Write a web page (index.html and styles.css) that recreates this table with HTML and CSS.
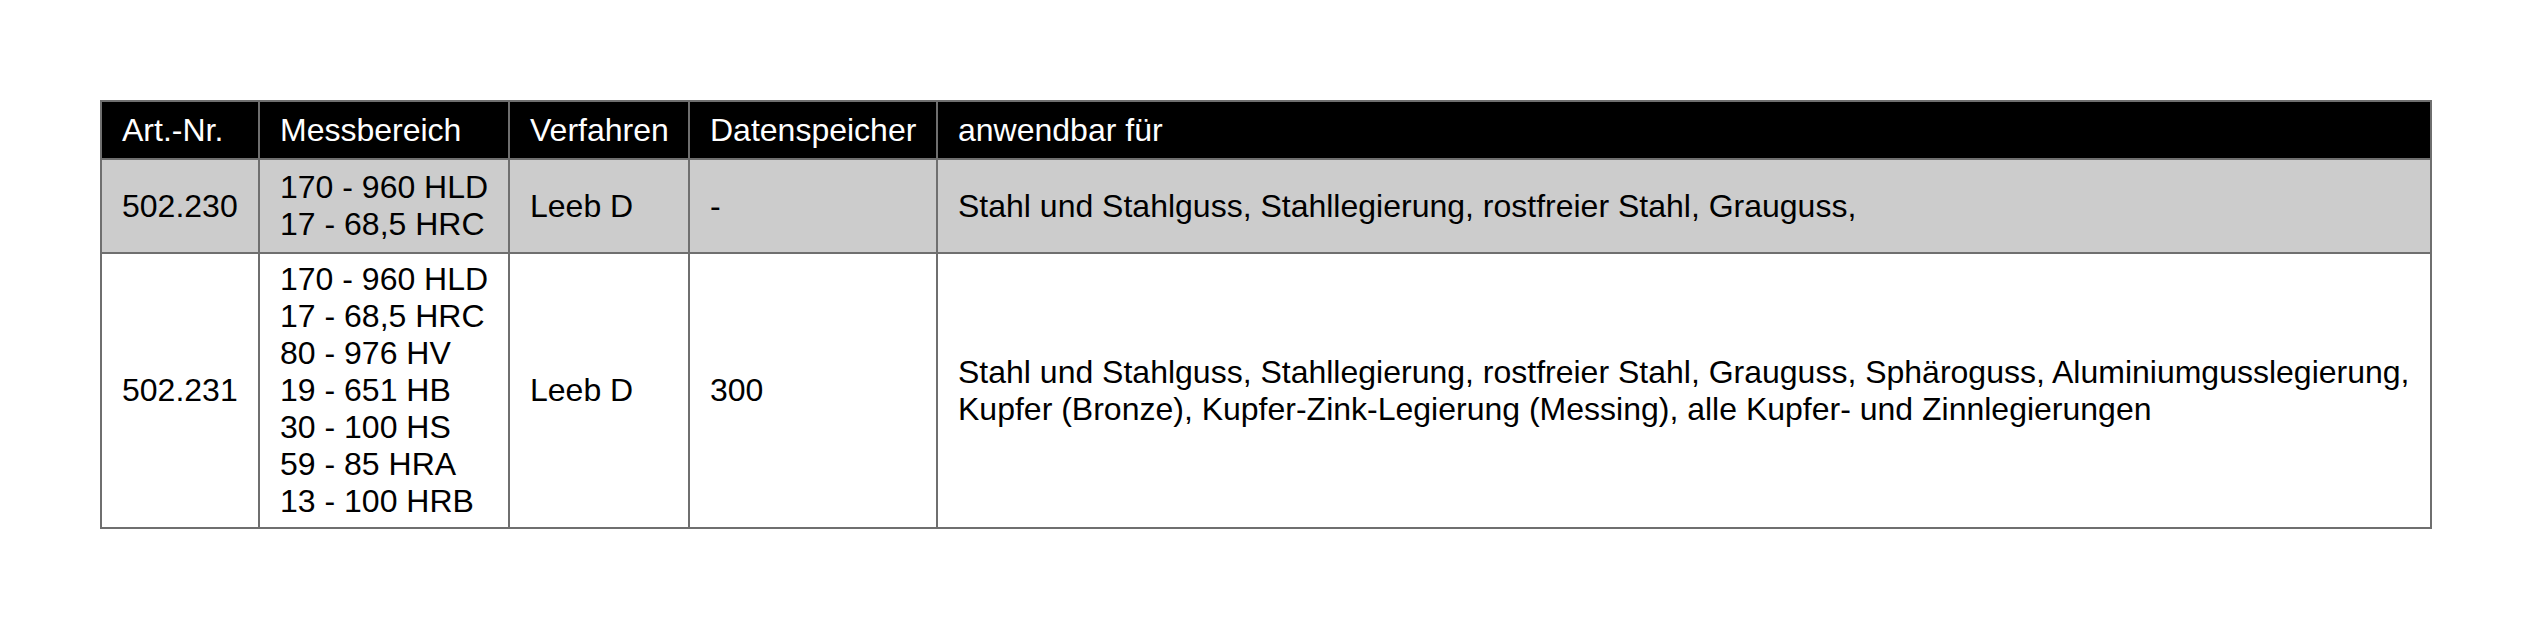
FILE: index.html
```html
<!DOCTYPE html>
<html lang="de">
<head>
<meta charset="utf-8">
<title>Härteprüfer</title>
<link rel="stylesheet" href="styles.css">
</head>
<body>
<table class="spec">
  <colgroup>
    <col class="c-art">
    <col class="c-mess">
    <col class="c-verf">
    <col class="c-daten">
    <col class="c-anw">
  </colgroup>
  <thead>
    <tr class="head">
      <th>Art.-Nr.</th>
      <th>Messbereich</th>
      <th>Verfahren</th>
      <th>Datenspeicher</th>
      <th>anwendbar für</th>
    </tr>
  </thead>
  <tbody>
    <tr class="row-grey">
      <td>502.230</td>
      <td>170 - 960 HLD<br>17 - 68,5 HRC</td>
      <td>Leeb D</td>
      <td>-</td>
      <td>Stahl und Stahlguss, Stahllegierung, rostfreier Stahl, Grauguss,</td>
    </tr>
    <tr class="row-white">
      <td>502.231</td>
      <td>170 - 960 HLD<br>17 - 68,5 HRC<br>80 - 976 HV<br>19 - 651 HB<br>30 - 100 HS<br>59 - 85 HRA<br>13 - 100 HRB</td>
      <td>Leeb D</td>
      <td>300</td>
      <td>Stahl und Stahlguss, Stahllegierung, rostfreier Stahl, Grauguss, Sphäroguss, Aluminiumgusslegierung,<br>Kupfer (Bronze), Kupfer-Zink-Legierung (Messing), alle Kupfer- und Zinnlegierungen</td>
    </tr>
  </tbody>
</table>
</body>
</html>
```

FILE: styles.css
```css
html, body {
  margin: 0;
  padding: 0;
  background: #ffffff;
}

body {
  padding: 100px 0 0 100px;
  font-family: "Liberation Sans", Arial, sans-serif;
  font-size: 32px;
  color: #000000;
}

.spec {
  border-collapse: collapse;
  table-layout: fixed;
  width: 2332px;
  border: 2px solid #6f6f6f;
}

.c-art { width: 158px; }
.c-mess { width: 250px; }
.c-verf { width: 180px; }
.c-daten { width: 248px; }
.c-anw { width: 1494px; }

.spec th,
.spec td {
  border: 2px solid #6f6f6f;
  text-align: left;
  vertical-align: middle;
  font-weight: normal;
  line-height: normal;
  white-space: nowrap;
  padding-left: 20px;
  padding-right: 4px;
}

.head th {
  background: #000000;
  color: #ffffff;
  padding-top: 10px;
  padding-bottom: 9px;
}

.row-grey td {
  background: #cccccc;
  padding-top: 9px;
  padding-bottom: 9px;
}

.row-white td {
  background: #ffffff;
  padding-top: 7px;
  padding-bottom: 7px;
}
```
